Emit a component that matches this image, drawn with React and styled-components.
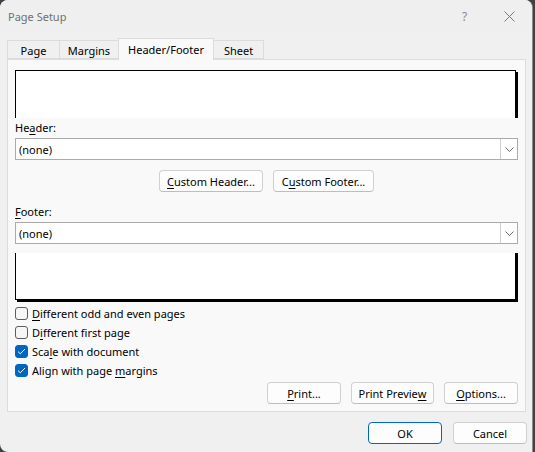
import React from "react";
import styled, { createGlobalStyle } from "styled-components";

const GlobalStyle = createGlobalStyle`
  html, body {
    margin: 0;
    padding: 0;
    background: #3f4244;
  }
  body {
    font-family: "Noto Sans", "Open Sans", Arial, sans-serif;
    font-size: 11px;
    color: #000;
  }
`;

// Window frame
const Window = styled.div`
  width: 532px;
  height: 452px;
  background: #f0f0f0;
  border-right: 1px solid #8c8c8c;
  border-radius: 8px 8px 0 8px;
  overflow: hidden;
  display: flex;
  flex-direction: column;
`;

const TitleBar = styled.div`
  height: 32px;
  display: flex;
  align-items: center;
  padding-left: 8px;
  background: #efefef;
`;

const Title = styled.span`
  flex: 1;
  color: #6f6f6f;
  font-size: 11px;
`;

const TitleButton = styled.div`
  width: 45px;
  height: 32px;
  display: flex;
  align-items: center;
  justify-content: center;
  color: #8a8a8a;
  font-size: 12px;
`;

// Tabs
const TabBar = styled.div`
  display: flex;
  align-items: flex-end;
  height: 21px;
  margin-top: 6px;
  padding-left: 8px;
  position: relative;
  z-index: 1;
`;

const Tab = styled.div`
  width: ${(p) => p.$w}px;
  height: ${(p) => (p.$active ? 22 : 19)}px;
  margin-bottom: ${(p) => (p.$active ? -1 : 0)}px;
  box-sizing: border-box;
  display: flex;
  align-items: center;
  justify-content: center;
  padding-top: ${(p) => (p.$active ? 0 : 2)}px;
  background: ${(p) => (p.$active ? "#f9f9f9" : "#f0f0f0")};
  border: 1px solid #dcdcdc;
  border-bottom: ${(p) => (p.$active ? "none" : "1px solid #dcdcdc")};
  margin-left: -1px;
`;

const Panel = styled.div`
  margin-left: 7px;
  width: 519px;
  height: 353px;
  box-sizing: border-box;
  background: #f9f9f9;
  border: 1px solid #dcdcdc;
  padding: 10px 7px 0 7px;
  display: flex;
  flex-direction: column;
`;

// Preview boxes
const PreviewClip = styled.div`
  height: ${(p) => p.$h}px;
  overflow: hidden;
  padding-right: 2px;
  display: flex;
  flex-direction: column;
  justify-content: ${(p) => (p.$cut === "top" ? "flex-end" : "flex-start")};
  margin-top: ${(p) => p.$mt || 0}px;
`;

const PreviewBox = styled.div`
  flex: none;
  height: 70px;
  background: #fff;
  border: 1px solid #000;
  box-shadow: 2px 2px 0 #000;
  margin-bottom: ${(p) => (p.$cut === "top" ? 2 : 0)}px;
`;

const FieldLabel = styled.div`
  height: 20px;
  line-height: 20px;
  margin-top: ${(p) => p.$mt || 0}px;
`;

const Key = styled.span`
  text-decoration: underline;
  text-underline-offset: 2px;
`;

const Select = styled.div`
  height: 22px;
  box-sizing: border-box;
  background: #fff;
  border: 1px solid #ababab;
  display: flex;
  align-items: center;
`;

const SelectText = styled.span`
  flex: 1;
  padding-left: 3px;
`;

const SelectArrow = styled.div`
  width: 17px;
  height: 100%;
  box-sizing: border-box;
  border-left: 1px solid #cfcfcf;
  display: flex;
  align-items: center;
  justify-content: center;
`;

// Buttons
const ButtonRow = styled.div`
  display: flex;
  gap: ${(p) => p.$gap || 10}px;
  justify-content: ${(p) => p.$justify || "flex-end"};
  margin-top: ${(p) => p.$mt || 0}px;
`;

const Button = styled.div`
  width: ${(p) => p.$w}px;
  height: 22px;
  box-sizing: border-box;
  display: flex;
  align-items: center;
  justify-content: center;
  background: #fdfdfd;
  border: 1px solid ${(p) => (p.$default ? "#0067c0" : "#d0d0d0")};
  border-bottom-color: ${(p) => (p.$default ? "#0067c0" : "#bdbdbd")};
  border-radius: 4px;
`;

// Checkboxes
const CheckList = styled.div`
  margin-top: 2px;
  display: flex;
  flex-direction: column;
`;

const CheckRow = styled.div`
  height: 19px;
  display: flex;
  align-items: center;
  gap: 4px;
`;

const Box = styled.div`
  width: 13px;
  height: 13px;
  box-sizing: border-box;
  border-radius: 3px;
  border: 1px solid ${(p) => (p.$checked ? "#0067c0" : "#5d5d5d")};
  background: ${(p) => (p.$checked ? "#0067c0" : "#f6f6f6")};
  display: flex;
  align-items: center;
  justify-content: center;
`;

const Footer = styled.div`
  display: flex;
  justify-content: flex-end;
  gap: 11px;
  margin-top: 10px;
  padding-right: 5px;
`;

const Chevron = () => (
  <svg width="9" height="5" viewBox="0 0 9 5">
    <path d="M0.5 0.5 L4.5 4.5 L8.5 0.5" fill="none" stroke="#6a6a6a" strokeWidth="1" />
  </svg>
);

const CloseIcon = () => (
  <svg width="11" height="11" viewBox="0 0 11 11">
    <path d="M0.5 0.5 L10.5 10.5 M10.5 0.5 L0.5 10.5" stroke="#7a7a7a" strokeWidth="1" />
  </svg>
);

const Check = ({ checked, children }) => (
  <CheckRow>
    <Box $checked={checked}>
      {checked && (
        <svg width="9" height="7" viewBox="0 0 9 7">
          <path d="M1 3.6 L3.3 5.8 L8 1" fill="none" stroke="#fff" strokeWidth="1" />
        </svg>
      )}
    </Box>
    <span>{children}</span>
  </CheckRow>
);

const Dropdown = ({ value }) => (
  <Select>
    <SelectText>{value}</SelectText>
    <SelectArrow>
      <Chevron />
    </SelectArrow>
  </Select>
);

export default function App() {
  return (
    <>
      <GlobalStyle />
      <Window>
        <TitleBar>
          <Title>Page Setup</Title>
          <TitleButton>?</TitleButton>
          <TitleButton>
            <CloseIcon />
          </TitleButton>
        </TitleBar>

        <TabBar>
          <Tab $w={53}>Page</Tab>
          <Tab $w={60}>Margins</Tab>
          <Tab $w={96} $active>Header/Footer</Tab>
          <Tab $w={51}>Sheet</Tab>
        </TabBar>

        <Panel>
          <PreviewClip $h={48}>
            <PreviewBox />
          </PreviewClip>

          <FieldLabel>
            He<Key>a</Key>der:
          </FieldLabel>
          <Dropdown value="(none)" />

          <ButtonRow $justify="center" $mt={10}>
            <Button $w={104}>
              <Key>C</Key>ustom Header...
            </Button>
            <Button $w={101}>
              C<Key>u</Key>stom Footer...
            </Button>
          </ButtonRow>

          <FieldLabel $mt={10}>
            <Key>F</Key>ooter:
          </FieldLabel>
          <Dropdown value="(none)" />

          <PreviewClip $h={49} $cut="top" $mt={9}>
            <PreviewBox $cut="top" />
          </PreviewClip>

          <CheckList>
            <Check>
              <Key>D</Key>ifferent odd and even pages
            </Check>
            <Check>
              D<Key>i</Key>fferent first page
            </Check>
            <Check checked>
              Sca<Key>l</Key>e with document
            </Check>
            <Check checked>
              Align with page <Key>m</Key>argins
            </Check>
          </CheckList>

          <ButtonRow $mt={2} $gap={10}>
            <Button $w={74}>
              <Key>P</Key>rint...
            </Button>
            <Button $w={83}>
              Print Previe<Key>w</Key>
            </Button>
            <Button $w={74}>
              <Key>O</Key>ptions...
            </Button>
          </ButtonRow>
        </Panel>

        <Footer>
          <Button $w={74} $default>
            OK
          </Button>
          <Button $w={74}>Cancel</Button>
        </Footer>
      </Window>
    </>
  );
}
